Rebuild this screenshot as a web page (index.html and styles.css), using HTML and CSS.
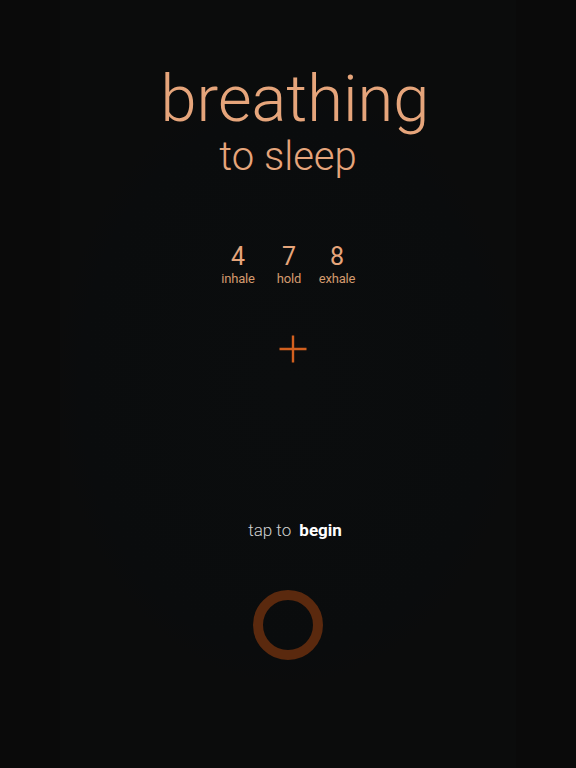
FILE: index.html
```html
<!DOCTYPE html>
<html>
<head>
<meta charset="utf-8">
<link rel="stylesheet" href="styles.css">
</head>
<body>
<div class="page">
  <main class="column">
    <h1 class="title">breathing</h1>
    <h2 class="subtitle">to sleep</h2>
    <div class="counts">
      <div class="count"><span class="num">4</span><span class="label">inhale</span></div>
      <div class="count"><span class="num">7</span><span class="label">hold</span></div>
      <div class="count"><span class="num">8</span><span class="label">exhale</span></div>
    </div>
    <div class="plus">
      <svg width="30" height="30" viewBox="0 0 30 30"><path d="M15 1.5 V28.5 M1.5 15 H28.5" stroke="#d2601f" stroke-width="2.4" fill="none"/></svg>
    </div>
    <p class="tap">tap to <b>begin</b></p>
    <div class="ring"></div>
  </main>
</div>
</body>
</html>
```
FILE: styles.css
```css
html, body {
  margin: 0;
  padding: 0;
  background: #0a0a0a;
}
.page {
  width: 576px;
  height: 768px;
  display: flex;
  justify-content: center;
  font-family: Roboto, "Liberation Sans", sans-serif;
}
.column {
  width: 456px;
  height: 768px;
  background: radial-gradient(ellipse 230px 300px at 50% 50%, #0b0d0e 0%, #0a0c0d 90%, #0b0c0c 100%);
  display: flex;
  flex-direction: column;
  align-items: center;
  box-sizing: border-box;
  padding-top: 67px;
}
.title {
  margin: 0 0 0 14px;
  font-weight: 300;
  font-size: 65px;
  line-height: 65px;
  color: #e6a57b;
}
.subtitle {
  margin: 5px 0 0 0;
  font-weight: 300;
  font-size: 40px;
  line-height: 40px;
  color: #e6a57b;
}
.counts {
  margin: 67px 4px 0 0;
  display: grid;
  grid-template-columns: 51px 51px 45px;
  justify-items: center;
}
.count {
  display: flex;
  flex-direction: column;
  align-items: center;
}
.num {
  font-size: 25px;
  line-height: 25px;
  color: #e6a57b;
}
.label {
  margin-top: 3px;
  font-size: 13px;
  line-height: 13px;
  color: #d39a6d;
  letter-spacing: -0.2px;
}
.plus {
  margin-top: 49px;
  margin-left: 9px;
  height: 30px;
}
.plus svg {
  display: block;
}
.tap {
  margin: 158px 0 0 14px;
  font-size: 17px;
  line-height: 17px;
  font-weight: 300;
  color: #d0d0d0;
}
.tap b {
  font-weight: 700;
  color: #ffffff;
  margin-left: 4px;
}
.ring {
  margin-top: 51px;
  width: 70px;
  height: 70px;
  box-sizing: border-box;
  border: 10px solid #5a290e;
  border-radius: 50%;
}
```
